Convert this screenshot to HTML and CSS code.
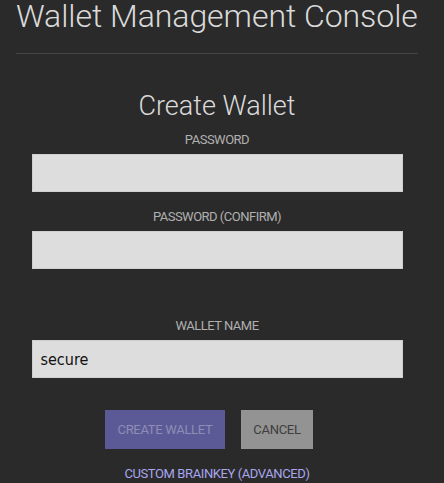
FILE: index.html
```html
<!DOCTYPE html>
<html>
<head>
<meta charset="utf-8">
<link rel="stylesheet" href="styles.css">
</head>
<body>
<div class="page">
  <h1 class="title">Wallet Management Console</h1>
  <hr class="rule">
  <div class="form">
    <h2 class="form-title">Create Wallet</h2>
    <label class="label">PASSWORD</label>
    <div class="input"></div>
    <label class="label label-gap">PASSWORD (CONFIRM)</label>
    <div class="input"></div>
    <label class="label label-gap-lg">WALLET NAME</label>
    <div class="input input-filled">secure</div>
    <div class="actions">
      <button class="btn btn-primary">CREATE WALLET</button>
      <button class="btn btn-cancel">CANCEL</button>
    </div>
    <a class="link">CUSTOM BRAINKEY (ADVANCED)</a>
  </div>
</div>
</body>
</html>
```
FILE: styles.css
```css
html, body {
  margin: 0;
  padding: 0;
  background: #2a2a2a;
  height: 100%;
  overflow: hidden;
}
.page {
  width: 434px;
  box-sizing: border-box;
  padding: 0 16px;
  font-family: Roboto, "Liberation Sans", sans-serif;
}
.title {
  margin: 0;
  font-family: "Roboto Light", Roboto, sans-serif;
  font-size: 32px;
  line-height: 32px;
  font-weight: 300;
  letter-spacing: -0.05px;
  color: #dadada;
  white-space: nowrap;
}
.rule {
  margin: 21px 0 0 0;
  border: 0;
  height: 1px;
  background: #464646;
}
.form {
  width: 371px;
  margin: 0 auto;
  display: flex;
  flex-direction: column;
  align-items: center;
}
.form-title {
  margin: 36px 0 0 0;
  font-family: "Roboto Light", Roboto, sans-serif;
  font-size: 27px;
  line-height: 32px;
  font-weight: 300;
  color: #dadada;
}
.label {
  display: block;
  margin-top: 10px;
  margin-bottom: 6px;
  font-size: 13px;
  line-height: 16px;
  letter-spacing: -0.5px;
  color: #b0b0b0;
}
.label-gap { margin-top: 17px; }
.label-gap-lg { margin-top: 49px; }
.input {
  width: 371px;
  height: 38px;
  box-sizing: border-box;
  background: #dddddd;
  border: 1px solid #cfcfcf;
  padding: 0 8px;
  display: flex;
  align-items: center;
  font-family: "DejaVu Sans Condensed", "DejaVu Sans", sans-serif;
  font-stretch: condensed;
  font-size: 16px;
  color: #111;
}
.actions {
  margin-top: 32px;
  display: flex;
  gap: 16px;
  padding-right: 16px;
}
.btn {
  height: 39px;
  border: 0;
  border-radius: 0;
  font-family: Roboto, "Liberation Sans", sans-serif;
  font-size: 13px;
  letter-spacing: -0.3px;
  padding: 0;
}
.btn-primary {
  width: 120px;
  background: #5c5a96;
  color: #8e8db4;
}
.btn-cancel {
  width: 72px;
  background: #939393;
  color: #3e3e3e;
}
.link {
  margin-top: 17px;
  font-size: 13px;
  line-height: 16px;
  letter-spacing: -0.4px;
  color: #a8a6ee;
}
```
